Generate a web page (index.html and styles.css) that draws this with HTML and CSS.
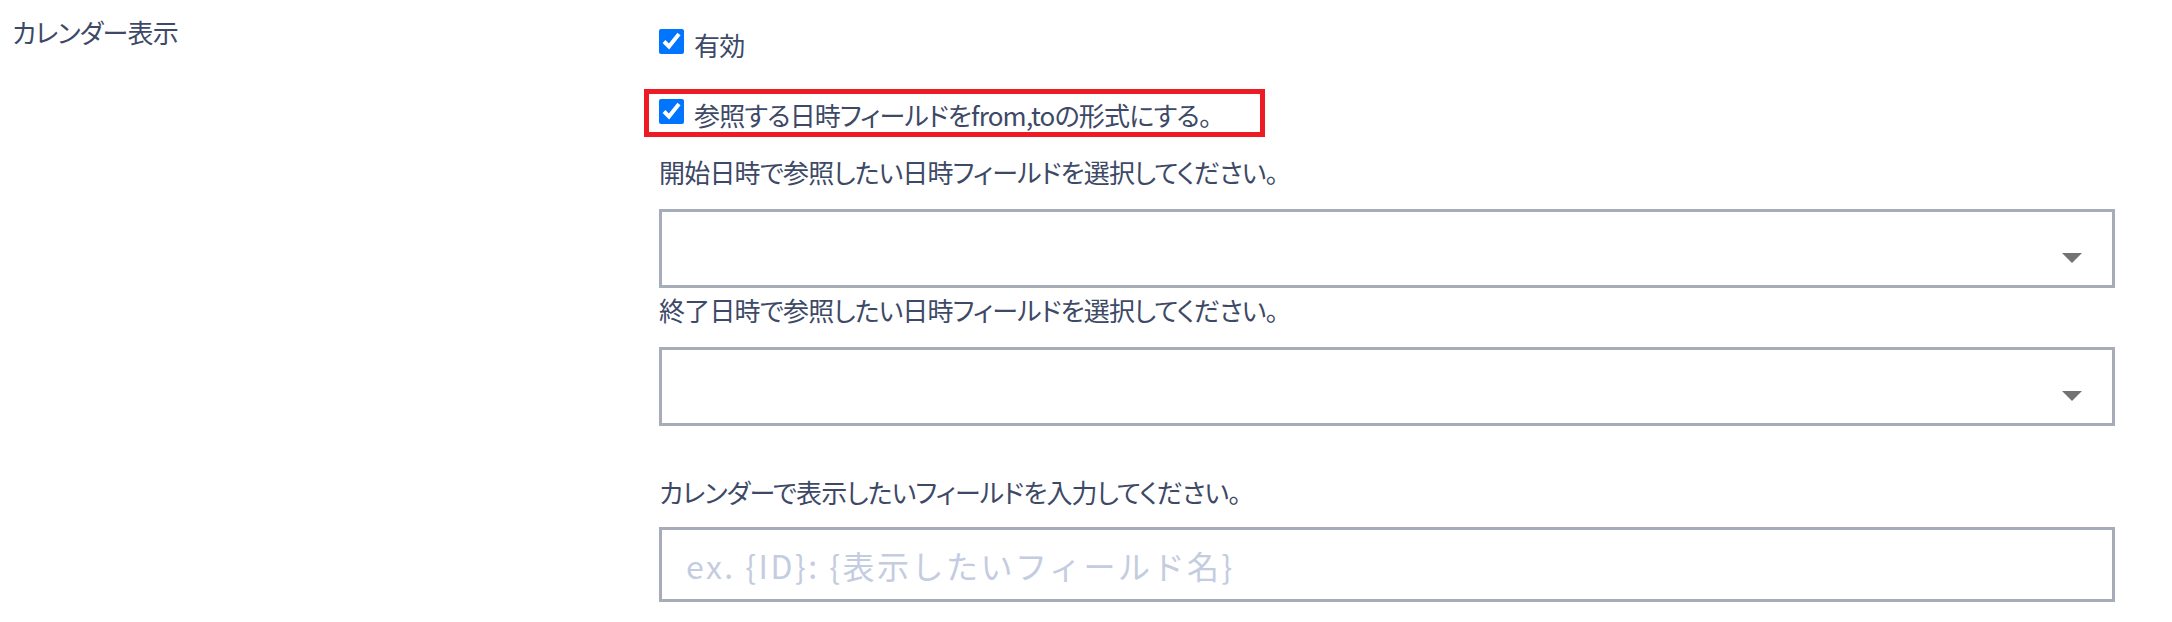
FILE: index.html
```html
<!DOCTYPE html>
<html lang="ja">
<head>
<meta charset="utf-8">
<title>カレンダー表示</title>
<link rel="stylesheet" href="styles.css">
</head>
<body>
<div class="setting-row">
  <div class="setting-label">カレンダー表示</div>
  <div class="setting-body">
    <label class="check-row">
      <input type="checkbox" class="check" checked>
      <span class="check-text">有効</span>
    </label>
    <div class="highlight">
      <label class="check-row">
        <input type="checkbox" class="check" checked>
        <span class="check-text">参照する日時フィールドをfrom,toの形式にする。</span>
      </label>
    </div>
    <div class="field-label first">開始日時で参照したい日時フィールドを選択してください。</div>
    <div class="select-box">
      <svg class="caret" width="20" height="10" viewBox="0 0 20 10"><polygon points="0,0 20,0 10,10" fill="#737373"/></svg>
    </div>
    <div class="field-label second">終了日時で参照したい日時フィールドを選択してください。</div>
    <div class="select-box">
      <svg class="caret" width="20" height="10" viewBox="0 0 20 10"><polygon points="0,0 20,0 10,10" fill="#737373"/></svg>
    </div>
    <div class="field-label third">カレンダーで表示したいフィールドを入力してください。</div>
    <input type="text" class="text-input" placeholder="ex. {ID}: {表示したいフィールド名}">
  </div>
</div>
</body>
</html>
```
FILE: styles.css
```css
html, body {
  margin: 0;
  padding: 0;
  background: #ffffff;
}
body {
  font-family: "Noto Sans CJK JP", "Noto Sans", sans-serif;
  font-size: 26px;
  line-height: 27px;
  letter-spacing: -0.8px;
  color: #3d4966;
  font-feature-settings: "palt";
}
.setting-row {
  display: flex;
  align-items: flex-start;
}
.setting-label {
  width: 647px;
  padding-left: 12px;
  padding-top: 18px;
  flex: none;
}
.setting-body {
  width: 1456px;
  padding-top: 29px;
  display: flex;
  flex-direction: column;
  align-items: flex-start;
  flex: none;
}
.check-row {
  display: flex;
  align-items: flex-start;
  gap: 10px;
}
.check {
  width: 25px;
  height: 25px;
  margin: 0;
  flex: none;
  accent-color: #0075ff;
}
.check-text {
  margin-top: 2px;
  white-space: nowrap;
}
.highlight {
  margin-top: 31px;
  margin-left: -15px;
  width: 621px;
  height: 48px;
  box-sizing: border-box;
  border: 5px solid #ed1c24;
  padding: 5px 0 0 10px;
}
.field-label {
  white-space: nowrap;
}
.field-label.first { margin-top: 21px; }
.field-label.second { margin-top: 8px; }
.field-label.third { margin-top: 52px; }
.select-box {
  margin-top: 24px;
  width: 1456px;
  height: 79px;
  box-sizing: border-box;
  border: 3px solid #a7acb9;
  display: flex;
  justify-content: flex-end;
  align-items: flex-start;
  padding: 41px 30px 0 0;
}
.caret {
  display: block;
}
.text-input {
  margin: 22px 0 0 0;
  width: 1456px;
  height: 75px;
  box-sizing: border-box;
  border: 3px solid #a7acb9;
  border-radius: 0;
  padding: 0 24px;
  font-family: "Noto Sans CJK JP", "Noto Sans", sans-serif;
  font-size: 32px;
  letter-spacing: 2.5px;
  font-feature-settings: normal;
  color: #3d4966;
  outline: none;
  background: #fff;
}
.text-input::placeholder {
  color: #c4cce0;
  opacity: 1;
}
```
